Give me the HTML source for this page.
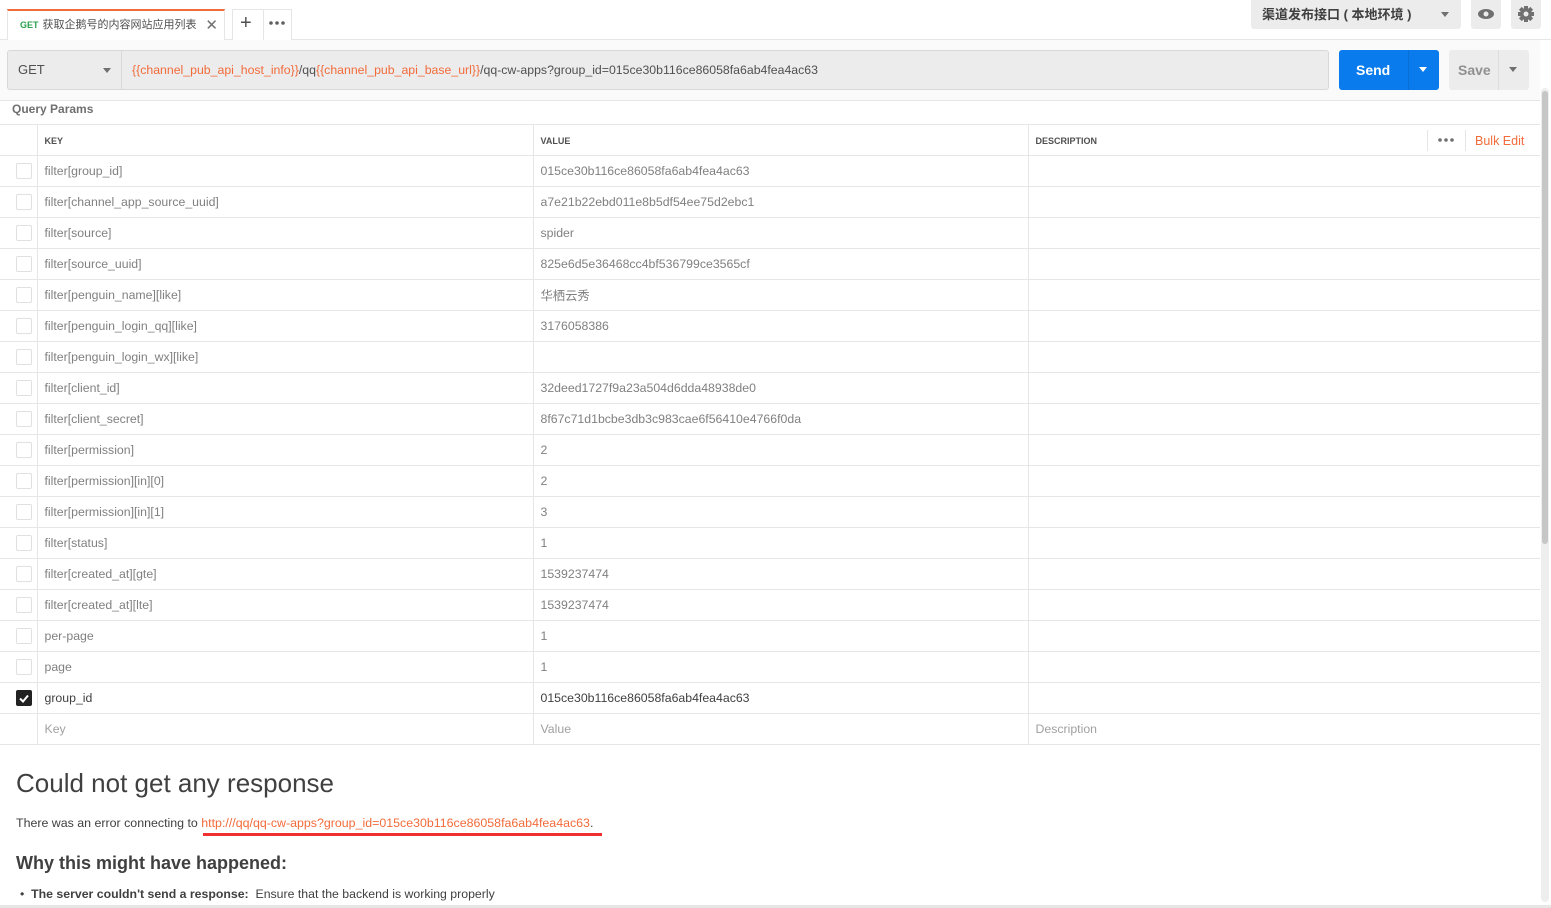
<!DOCTYPE html>
<html><head><meta charset="utf-8"><style>
*{box-sizing:border-box;margin:0;padding:0}
body{width:1551px;height:908px;overflow:hidden;background:#fff;font-family:"Liberation Sans","Noto Sans CJK SC",sans-serif;color:#505050;position:relative}
.abs{position:absolute}
.tabbar{left:0;top:0;width:1551px;height:40px;background:#fff;border-bottom:1px solid #e6e6e6}
.tab{left:7px;top:9px;width:218px;height:31px;border-top:2px solid #f26b3a;border-left:1px solid #e6e6e6;border-right:1px solid #e6e6e6;background:#fff;font-size:11px;line-height:29px;padding-left:12px;color:#505050}
.tab b{color:#2aa14b;font-weight:bold;font-size:9px;margin-right:4px}
.urlbar{left:0;top:40px;width:1540px;height:61px;background:#fafafa;border-bottom:1px solid #e6e6e6}
.method{left:7px;top:50px;width:115px;height:40px;background:#ececec;border:1px solid #d8d8d8;border-radius:3px 0 0 3px;font-size:13px;line-height:38px;padding-left:10px;color:#505050}
.url{left:121px;top:50px;width:1208px;height:40px;background:#ececec;border:1px solid #d8d8d8;border-radius:0 3px 3px 0;font-size:12.3px;line-height:38px;padding-left:10px;color:#505050}
.o{color:#f26b3a}
.tri{width:0;height:0;border-left:4px solid transparent;border-right:4px solid transparent;border-top:5px solid #707070}
.send{left:1339px;top:50px;width:100px;height:40px;background:#097bed;border-radius:3px;color:#fff;font-weight:bold;font-size:14px;line-height:40px;padding-left:17px}
.save{left:1449px;top:50px;width:80px;height:40px;background:#ececec;border-radius:3px;color:#909090;font-weight:bold;font-size:14px;line-height:40px;padding-left:9px}
.qp{left:12px;top:101px;font-size:12px;color:#707070;font-weight:bold;line-height:16px}
table{position:absolute;left:0;top:124px;width:1540px;border-collapse:collapse;font-size:12.3px}
td{height:31px;border-top:1px solid #e6e6e6;border-bottom:1px solid #e6e6e6;padding-left:7px;color:#808080;white-space:nowrap}
td.c{width:37px;padding:0;border-right:1px solid #e6e6e6}
td.k{width:496px;border-right:1px solid #e6e6e6}
td.v{width:495px;border-right:1px solid #e6e6e6}
tr.h td{height:31px;font-size:9px;font-weight:bold;color:#505050;padding-top:2px;position:relative}
.cb{width:16px;height:16px;border:1px solid #e0e0e0;border-radius:2px;margin-left:16px;background:#fff}
.cb.on{background:#222;border-color:#222;position:relative}
.ph td{color:#a0a0a0}
.scroll{left:1541px;top:88px;width:8px;height:814px;background:#eee;border-radius:4px}
.thumb{left:1542px;top:91px;width:6px;height:453px;background:#c6c6c6;border-radius:3px}
</style></head><body>
<div class="abs tabbar"></div>
<div class="abs tab"><b>GET</b>获取企鹅号的内容网站应用列表<span style="position:absolute;right:6px;top:0;font-size:15px;color:#707070">✕</span></div>
<div class="abs" style="left:232px;top:9px;width:60px;height:31px;border:1px solid #e6e6e6;border-bottom:none;background:#fff"></div>
<div class="abs" style="left:263px;top:10px;width:1px;height:30px;background:#e6e6e6"></div>
<div class="abs" style="left:240px;top:11px;font-size:20px;color:#505050;line-height:24px">+</div>
<svg class="abs" style="left:268px;top:20px" width="18" height="6"><circle cx="3" cy="3" r="1.8" fill="#606060"/><circle cx="9" cy="3" r="1.8" fill="#606060"/><circle cx="15" cy="3" r="1.8" fill="#606060"/></svg>
<div class="abs" style="left:1251px;top:0;width:210px;height:29px;background:#ececec;border-radius:0 0 3px 3px;font-size:13px;font-weight:bold;color:#404040;line-height:29px;padding-left:11px">渠道发布接口 ( 本地环境 )<div class="tri abs" style="left:190px;top:12px"></div></div>
<div class="abs" style="left:1471px;top:0;width:30px;height:29px;background:#ececec;border-radius:0 0 3px 3px"><svg width="30" height="29"><ellipse cx="15" cy="14" rx="8" ry="5" fill="#707070"/><circle cx="15" cy="14" r="2.5" fill="#ececec"/></svg></div>
<div class="abs" style="left:1511px;top:0;width:30px;height:29px;background:#ececec;border-radius:0 0 3px 3px"><svg width="30" height="29"><g fill="#707070" transform="translate(15 14)"><rect x="-2" y="-8" width="4" height="16"/><rect x="-2" y="-8" width="4" height="16" transform="rotate(45)"/><rect x="-2" y="-8" width="4" height="16" transform="rotate(90)"/><rect x="-2" y="-8" width="4" height="16" transform="rotate(135)"/><circle r="6"/></g><circle cx="15" cy="14" r="2.5" fill="#ececec"/></svg></div>
<div class="abs urlbar"></div>
<div class="abs method">GET<div class="tri abs" style="left:95px;top:17px"></div></div>
<div class="abs url"><span class="o">{{channel_pub_api_host_info}}</span>/qq<span class="o">{{channel_pub_api_base_url}}</span>/qq-cw-apps?group_id=015ce30b116ce86058fa6ab4fea4ac63</div>
<div class="abs send">Send<div class="abs" style="left:69px;top:0;width:1px;height:40px;background:#0a6fd4"></div><div class="abs" style="left:80px;top:17px;width:0;height:0;border-left:4px solid transparent;border-right:4px solid transparent;border-top:5px solid #fff"></div></div>
<div class="abs save">Save<div class="abs" style="left:49px;top:0;width:1px;height:40px;background:#dcdcdc"></div><div class="tri abs" style="left:60px;top:17px"></div></div>
<div class="abs qp">Query Params</div>
<table>
<tr class="h"><td class="c"></td><td class="k">KEY</td><td class="v">VALUE</td><td>DESCRIPTION</td></tr>
<tr><td class="c"><div class="cb"></div></td><td class="k">filter[group_id]</td><td class="v">015ce30b116ce86058fa6ab4fea4ac63</td><td></td></tr>
<tr><td class="c"><div class="cb"></div></td><td class="k">filter[channel_app_source_uuid]</td><td class="v">a7e21b22ebd011e8b5df54ee75d2ebc1</td><td></td></tr>
<tr><td class="c"><div class="cb"></div></td><td class="k">filter[source]</td><td class="v">spider</td><td></td></tr>
<tr><td class="c"><div class="cb"></div></td><td class="k">filter[source_uuid]</td><td class="v">825e6d5e36468cc4bf536799ce3565cf</td><td></td></tr>
<tr><td class="c"><div class="cb"></div></td><td class="k">filter[penguin_name][like]</td><td class="v">华栖云秀</td><td></td></tr>
<tr><td class="c"><div class="cb"></div></td><td class="k">filter[penguin_login_qq][like]</td><td class="v">3176058386</td><td></td></tr>
<tr><td class="c"><div class="cb"></div></td><td class="k">filter[penguin_login_wx][like]</td><td class="v"></td><td></td></tr>
<tr><td class="c"><div class="cb"></div></td><td class="k">filter[client_id]</td><td class="v">32deed1727f9a23a504d6dda48938de0</td><td></td></tr>
<tr><td class="c"><div class="cb"></div></td><td class="k">filter[client_secret]</td><td class="v">8f67c71d1bcbe3db3c983cae6f56410e4766f0da</td><td></td></tr>
<tr><td class="c"><div class="cb"></div></td><td class="k">filter[permission]</td><td class="v">2</td><td></td></tr>
<tr><td class="c"><div class="cb"></div></td><td class="k">filter[permission][in][0]</td><td class="v">2</td><td></td></tr>
<tr><td class="c"><div class="cb"></div></td><td class="k">filter[permission][in][1]</td><td class="v">3</td><td></td></tr>
<tr><td class="c"><div class="cb"></div></td><td class="k">filter[status]</td><td class="v">1</td><td></td></tr>
<tr><td class="c"><div class="cb"></div></td><td class="k">filter[created_at][gte]</td><td class="v">1539237474</td><td></td></tr>
<tr><td class="c"><div class="cb"></div></td><td class="k">filter[created_at][lte]</td><td class="v">1539237474</td><td></td></tr>
<tr><td class="c"><div class="cb"></div></td><td class="k">per-page</td><td class="v">1</td><td></td></tr>
<tr><td class="c"><div class="cb"></div></td><td class="k">page</td><td class="v">1</td><td></td></tr>
<tr style="color:#404040"><td class="c"><div class="cb on"><svg width="14" height="14" style="position:absolute;left:0;top:0"><path d="M3 7.5l3 3 5-6" stroke="#fff" stroke-width="2" fill="none"/></svg></div></td><td class="k" style="color:#404040">group_id</td><td class="v" style="color:#404040">015ce30b116ce86058fa6ab4fea4ac63</td><td></td></tr>
<tr class="ph"><td class="c"></td><td class="k">Key</td><td class="v">Value</td><td>Description</td></tr>
</table>
<div class="abs" style="left:1427px;top:130px;width:1px;height:21px;background:#e6e6e6"></div>
<svg class="abs" style="left:1437px;top:137px" width="18" height="6"><circle cx="3" cy="3" r="1.8" fill="#707070"/><circle cx="9" cy="3" r="1.8" fill="#707070"/><circle cx="15" cy="3" r="1.8" fill="#707070"/></svg>
<div class="abs" style="left:1465px;top:130px;width:1px;height:21px;background:#e6e6e6"></div>
<div class="abs" style="left:1475px;top:133px;font-size:12.5px;color:#f26b3a;line-height:16px">Bulk Edit</div>
<div class="abs" style="left:16px;top:766px;font-size:26px;color:#404040;line-height:34px">Could not get any response</div>
<div class="abs" style="left:16px;top:815px;font-size:12.4px;color:#404040;line-height:16px">There was an error connecting to <span class="o">http:///qq/qq-cw-apps?group_id=015ce30b116ce86058fa6ab4fea4ac63</span>.</div>
<div class="abs" style="left:203px;top:833px;width:399px;height:3px;background:#f03030"></div>
<div class="abs" style="left:16px;top:851px;font-size:18px;font-weight:bold;color:#404040;line-height:24px">Why this might have happened:</div>
<div class="abs" style="left:20px;top:886px;font-size:12.3px;color:#404040;line-height:16px">•&nbsp;&nbsp;<b>The server couldn't send a response:</b>&nbsp;&nbsp;Ensure that the backend is working properly</div>
<div class="abs" style="left:0;top:905px;width:1551px;height:3px;background:#e6e6e6"></div>
<div class="abs scroll"></div>
<div class="abs thumb"></div>
</body></html>
